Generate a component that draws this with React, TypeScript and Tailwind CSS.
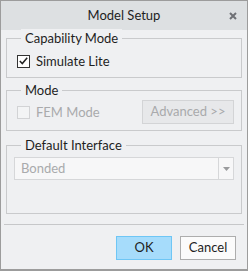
import React from 'react';

const font = { fontFamily: 'Lato, "Noto Sans", sans-serif' };

function Group({ label, className, children }: { label: string; className: string; children?: React.ReactNode }) {
  return (
    <div className={`relative ml-[5px] w-[236px] border border-[#c9cacc] ${className}`}>
      <span className="absolute left-[14px] top-[-10px] bg-[#eff0f2] px-[4px] text-[13px] leading-[18px] text-[#1e1e1e]">
        {label}
      </span>
      {children}
    </div>
  );
}

export default function App() {
  return (
    <div className="w-[248px] h-[271px] border border-[#9c9c9c] border-b-2 bg-[#eff0f2] flex flex-col" style={font}>
      {/* title bar */}
      <div className="h-[29px] bg-[#dde0e2] relative flex items-center justify-center text-[13px] text-[#1e1e1e]">
        Model Setup
        <svg className="absolute right-[10px] top-[11px]" width="8" height="8" viewBox="0 0 8 8">
          <path d="M1 1 L7 7 M7 1 L1 7" stroke="#6f7176" strokeWidth="2" />
        </svg>
      </div>

      <Group label="Capability Mode" className="mt-[8px] h-[40px]">
        <div className="flex items-center mt-[14px] ml-[10px] gap-[6px]">
          <div className="w-[13px] h-[13px] border border-[#333] bg-white flex items-center justify-center">
            <svg width="9" height="8" viewBox="0 0 9 8">
              <path d="M0.8 4 L3.3 6.6 L8.2 0.8" stroke="#222" strokeWidth="1.5" fill="none" />
            </svg>
          </div>
          <span className="text-[13px] leading-[16px] text-[#1e1e1e]">Simulate Lite</span>
        </div>
      </Group>

      <Group label="Mode" className="mt-[12px] h-[41px]">
        <div className="flex items-center mt-[9px] ml-[10px]">
          <div className="w-[13px] h-[13px] border border-[#d2d3d5] bg-[#f3f4f5]" />
          <span className="ml-[6px] text-[13px] leading-[16px] text-[#a9aaac]">FEM Mode</span>
          <div className="ml-auto mr-[7px] w-[92px] h-[24px] border border-[#d3d4d6] bg-[#e7e8ea] flex items-center justify-center text-[13px] text-[#a9aaac]">
            Advanced &gt;&gt;
          </div>
        </div>
      </Group>

      <Group label="Default Interface" className="mt-[14px] h-[69px]">
        <div className="mt-[11px] ml-[7px] w-[220px] h-[23px] border border-[#d6d7d9] bg-[#f7f7f8] flex items-center">
          <span className="ml-[6px] flex-1 text-[13px] text-[#a9aaac]">Bonded</span>
          <div className="w-[15px] h-full border-l border-[#d6d7d9] flex items-center justify-center">
            <svg width="7" height="4" viewBox="0 0 7 4">
              <path d="M0 0 H7 L3.5 4 Z" fill="#9a9b9d" />
            </svg>
          </div>
        </div>
      </Group>

      <div className="mt-[10px] ml-[3px] w-[240px] h-px bg-[#c6c7c9]" />

      <div className="mt-[11px] flex justify-end gap-[8px] mr-[11px]">
        <div className="w-[56px] h-[24px] border border-[#6ec6f5] bg-[#a6dcfb] flex items-center justify-center text-[13px] text-[#1e1e1e]">
          OK
        </div>
        <div className="w-[56px] h-[24px] border border-[#adadad] bg-[#fbfbfb] flex items-center justify-center text-[13px] text-[#1e1e1e]">
          Cancel
        </div>
      </div>
    </div>
  );
}
